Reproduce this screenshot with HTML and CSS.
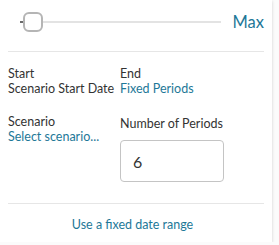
FILE: index.html
```html
<!DOCTYPE html>
<html lang="en">
<head>
    <meta charset="UTF-8">
    <meta name="viewport" content="width=device-width, initial-scale=1.0">
    <title>Date Range</title>
    <link rel="stylesheet" href="styles.css">
</head>
<body>

    <div class="panel">
        <div class="slider-row">
            <div class="slider">
                <div class="track"></div>
                <div class="track-fill"></div>
                <div class="thumb"></div>
            </div>
            <a class="link max">Max</a>
        </div>

        <div class="details">
            <div class="field">
                <div>Start</div>
                <div>Scenario Start Date</div>
            </div>
            <div class="field">
                <div>End</div>
                <a class="link">Fixed Periods</a>
            </div>
            <div class="field">
                <div>Scenario</div>
                <a class="link">Select scenario...</a>
            </div>
            <div class="field periods">
                <label for="periods">Number of Periods</label>
                <input type="text" id="periods" value="6">
            </div>
        </div>

        <div class="footer">
            <a class="link">Use a fixed date range</a>
        </div>
    </div>

</body>
</html>
```

FILE: styles.css
```css
body {
    margin: 0;
    background-color: #fbfbfb;
    font-family: Lato, "Noto Sans", sans-serif;
    color: #333;
}

.panel {
    width: 272px;
    box-sizing: border-box;
    padding: 0 8px 10px 8px;
    background-color: #fff;
    box-shadow: 0 1px 3px rgba(0, 0, 0, 0.18);
}

.link {
    color: #1e7898;
    text-decoration: none;
    cursor: pointer;
}

/* barra del slider */
.slider-row {
    display: flex;
    align-items: center;
    height: 52px;
    padding-bottom: 7px;
    box-sizing: border-box;
    border-bottom: 1px solid #e6e6e6;
}

.slider {
    position: relative;
    flex: 1;
    height: 20px;
    margin-left: 12px;
}

.track {
    position: absolute;
    left: 0;
    right: 0;
    top: 9px;
    height: 2px;
    background-color: #e3e3e3;
}

.track-fill {
    position: absolute;
    left: 0;
    width: 4px;
    top: 9px;
    height: 2px;
    background-color: #6b6b6b;
}

.thumb {
    position: absolute;
    left: 3px;
    top: 0;
    width: 20px;
    height: 20px;
    box-sizing: border-box;
    border: 2px solid #b5b5b5;
    border-radius: 6px;
    background-color: #fff;
}

.max {
    margin-left: 12px;
    font-size: 16.5px;
}

.details {
    display: grid;
    grid-template-columns: 112px 1fr;
    row-gap: 18px;
    padding: 14px 0 21px 0;
    font-size: 12.5px;
    line-height: 15px;
    border-bottom: 1px solid #e6e6e6;
}

.field div, .field a, .field label {
    display: block;
}

.periods label {
    padding-top: 2px;
}

.periods input {
    display: block;
    width: 104px;
    height: 42px;
    box-sizing: border-box;
    margin-top: 9px;
    padding: 0 0 0 12px;
    border: 1px solid #c4c4c4;
    border-radius: 4px;
    font-family: Lato, "Noto Sans", sans-serif;
    font-size: 16px;
    color: #333;
}

.footer {
    padding: 13px 7px 0 0;
    text-align: center;
    font-size: 12.5px;
    line-height: 15px;
}
```
